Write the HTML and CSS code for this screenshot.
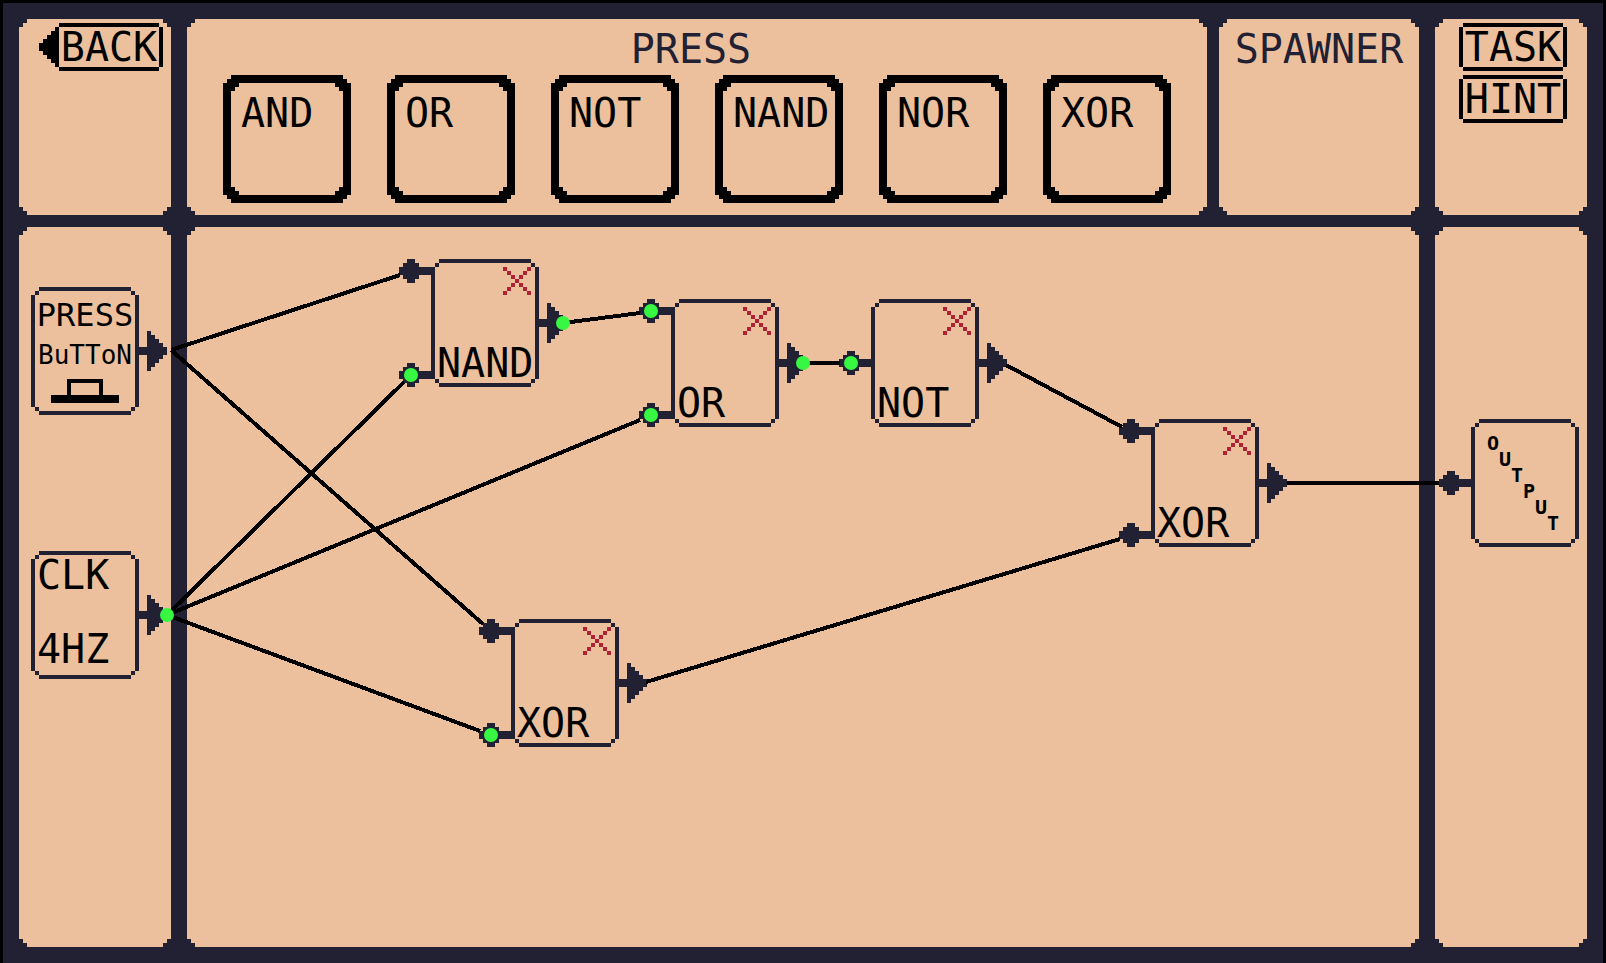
FILE: index.html
```html
<!DOCTYPE html>
<html lang="en">
<head>
<meta charset="utf-8">
<meta name="viewport" content="width=device-width, initial-scale=1">
<title>Logic gates</title>
<link rel="stylesheet" href="styles.css">
</head>
<body>
<svg class="defs" aria-hidden="true">
  <symbol id="slot" viewBox="0 0 32 32"><path d="M2 0H30V1H31V2H32V30H31V31H30V32H2V31H1V30H0V2H1V1H2ZM4 2V3H3V4H2V28H3V29H4V30H28V29H29V28H30V4H29V3H28V2Z" fill-rule="evenodd"/></symbol>
  <symbol id="plate" viewBox="0 0 27 12"><path d="M1 0H26V1H1ZM1 11H26V12H1ZM0 1H1V11H0ZM26 1H27V11H26Z"/></symbol>
  <symbol id="arrow" viewBox="0 0 4 12"><path d="M4 2H3V3H2V4H1V5H0V7H1V8H2V9H3V10H4Z"/></symbol>
  <symbol id="body" viewBox="0 0 27 32"><path d="M2 0H25V1H2ZM2 31H25V32H2ZM0 2H1V30H0ZM26 2H27V30H26ZM1 1H2V2H1ZM25 1H26V2H25ZM1 30H2V31H1ZM25 30H26V31H25Z"/></symbol>
  <symbol id="out" viewBox="0 0 7 10"><path d="M0 4H2V0H3V1H4V2H5V3H6V4H7V6H6V7H5V8H4V9H3V10H2V6H0Z"/></symbol>
  <symbol id="in" viewBox="0 0 8 6"><path d="M0 2H1V1H2V0H4V1H5V2H8V4H5V5H4V6H2V5H1V4H0Z"/></symbol>
  <symbol id="cross" viewBox="0 0 7 7"><path d="M0 0H1V1H0ZM1 1H2V2H1ZM2 2H3V3H2ZM3 3H4V4H3ZM4 4H5V5H4ZM5 5H6V6H5ZM6 6H7V7H6ZM6 0H7V1H6ZM5 1H6V2H5ZM4 2H5V3H4ZM2 4H3V5H2ZM1 5H2V6H1ZM0 6H1V7H0Z"/></symbol>
</svg>
<div class="screen">
  <main class="board">
    <nav class="panel nav-left">
      <button class="plate back" type="button"><svg class="back-arrow" aria-hidden="true"><use href="#arrow"/></svg><svg class="frame" aria-hidden="true"><use href="#plate"/></svg>BACK</button>
    </nav>
    <div class="tools">
      <section class="panel palette">
        <h1 class="heading palette-title">PRESS</h1>
        <div class="slots">
          <button class="slot" type="button"><svg class="frame" aria-hidden="true"><use href="#slot"/></svg>AND</button>
          <button class="slot" type="button"><svg class="frame" aria-hidden="true"><use href="#slot"/></svg>OR</button>
          <button class="slot" type="button"><svg class="frame" aria-hidden="true"><use href="#slot"/></svg>NOT</button>
          <button class="slot" type="button"><svg class="frame" aria-hidden="true"><use href="#slot"/></svg>NAND</button>
          <button class="slot" type="button"><svg class="frame" aria-hidden="true"><use href="#slot"/></svg>NOR</button>
          <button class="slot" type="button"><svg class="frame" aria-hidden="true"><use href="#slot"/></svg>XOR</button>
        </div>
      </section>
      <section class="panel spawner"><h2 class="heading">SPAWNER</h2></section>
    </div>
    <nav class="panel nav-right">
      <button class="plate" type="button"><svg class="frame" aria-hidden="true"><use href="#plate"/></svg>TASK</button>
      <button class="plate" type="button"><svg class="frame" aria-hidden="true"><use href="#plate"/></svg>HINT</button>
    </nav>

    <section class="panel inputs">
      <button class="node press" type="button">
        <svg class="frame" aria-hidden="true"><use href="#body"/></svg><svg class="port out" aria-hidden="true"><use href="#out"/></svg>
        <span class="press-top">PRESS</span>
        <span class="press-bottom">BuTToN</span>
        <svg class="push" viewBox="0 0 17 6" aria-hidden="true"><path d="M4 0H13V4H17V6H0V4H4ZM5 1V4H12V1Z" fill-rule="evenodd"/></svg>
      </button>
      <div class="node clock">
        <svg class="frame" aria-hidden="true"><use href="#body"/></svg><svg class="port out" aria-hidden="true"><use href="#out"/></svg>
        <span>CLK</span><span>4HZ</span>
      </div>
    </section>

    <section class="panel workspace">
      <div class="node gate nand"><svg class="frame" aria-hidden="true"><use href="#body"/></svg><svg class="port in-top" aria-hidden="true"><use href="#in"/></svg><svg class="port in-bottom" aria-hidden="true"><use href="#in"/></svg><svg class="port out" aria-hidden="true"><use href="#out"/></svg><button class="remove" type="button" aria-label="Remove NAND"><svg aria-hidden="true"><use href="#cross"/></svg></button><span>NAND</span></div>
      <div class="node gate or"><svg class="frame" aria-hidden="true"><use href="#body"/></svg><svg class="port in-top" aria-hidden="true"><use href="#in"/></svg><svg class="port in-bottom" aria-hidden="true"><use href="#in"/></svg><svg class="port out" aria-hidden="true"><use href="#out"/></svg><button class="remove" type="button" aria-label="Remove OR"><svg aria-hidden="true"><use href="#cross"/></svg></button><span>OR</span></div>
      <div class="node gate not"><svg class="frame" aria-hidden="true"><use href="#body"/></svg><svg class="port in-middle" aria-hidden="true"><use href="#in"/></svg><svg class="port out" aria-hidden="true"><use href="#out"/></svg><button class="remove" type="button" aria-label="Remove NOT"><svg aria-hidden="true"><use href="#cross"/></svg></button><span>NOT</span></div>
      <div class="node gate xor-final"><svg class="frame" aria-hidden="true"><use href="#body"/></svg><svg class="port in-top" aria-hidden="true"><use href="#in"/></svg><svg class="port in-bottom" aria-hidden="true"><use href="#in"/></svg><svg class="port out" aria-hidden="true"><use href="#out"/></svg><button class="remove" type="button" aria-label="Remove XOR"><svg aria-hidden="true"><use href="#cross"/></svg></button><span>XOR</span></div>
      <div class="node gate xor-first"><svg class="frame" aria-hidden="true"><use href="#body"/></svg><svg class="port in-top" aria-hidden="true"><use href="#in"/></svg><svg class="port in-bottom" aria-hidden="true"><use href="#in"/></svg><svg class="port out" aria-hidden="true"><use href="#out"/></svg><button class="remove" type="button" aria-label="Remove XOR"><svg aria-hidden="true"><use href="#cross"/></svg></button><span>XOR</span></div>
    </section>

    <section class="panel outputs">
      <div class="node output">
        <svg class="frame" aria-hidden="true"><use href="#body"/></svg><svg class="port in-middle" aria-hidden="true"><use href="#in"/></svg>
        <span>O</span><span>U</span><span>T</span><span>P</span><span>U</span><span>T</span>
      </div>
    </section>
  </main>

  <svg class="wires" aria-hidden="true">
    <g class="wire">
      <path d="M171 350L400 275"/>
      <path d="M171 350L483 624"/>
      <path d="M167 615L404 382"/>
      <path d="M167 615L640 420"/>
      <path d="M167 615L480 731"/>
      <path d="M563 323L640 313"/>
      <path d="M803 363H840"/>
      <path d="M1006 365L1122 427"/>
      <path d="M646 682L1120 539"/>
    </g>
    <g class="live">
      <circle cx="167" cy="615" r="7"/>
      <circle cx="411" cy="375" r="7"/>
      <circle cx="563" cy="323" r="7"/>
      <circle cx="651" cy="311" r="7"/>
      <circle cx="651" cy="415" r="7"/>
      <circle cx="803" cy="363" r="7"/>
      <circle cx="851" cy="363" r="7"/>
      <circle cx="491" cy="735" r="7"/>
    </g>
  </svg>
  <div class="output-wire"></div>
</div>
</body>
</html>
```
FILE: styles.css
```css
:root {
  --ink: #000;
  --line: #222033;
  --paper: #ecc09c;
  --red: #ae2334;
  --green: #37f743;
}

* { box-sizing: border-box; }

body {
  margin: 0;
  background: var(--ink);
  color: var(--ink);
  font: 40px/44px "DejaVu Sans Mono", monospace;
}

button {
  margin: 0;
  padding: 0;
  border: 0;
  background: none;
  color: inherit;
  font: inherit;
  text-align: left;
  cursor: pointer;
}

svg { display: block; fill: currentColor; }
.defs { position: absolute; width: 0; height: 0; }

.screen {
  position: relative;
  min-width: 1606px;
  min-height: 100vh;
  padding: 3px 3px 0;
  display: flex;
}

.board {
  flex: 1;
  display: grid;
  grid-template-columns: 152px 1fr 152px;
  grid-template-rows: auto 1fr;
  gap: 12px 16px;
  padding: 16px;
  background: var(--line);
}

/* Stepped pixel corners */
.panel {
  background: var(--paper);
  clip-path: polygon(
    0 8px, 4px 8px, 4px 4px, 8px 4px, 8px 0,
    calc(100% - 8px) 0, calc(100% - 8px) 4px, calc(100% - 4px) 4px, calc(100% - 4px) 8px, 100% 8px,
    100% calc(100% - 8px), calc(100% - 4px) calc(100% - 8px), calc(100% - 4px) calc(100% - 4px), calc(100% - 8px) calc(100% - 4px), calc(100% - 8px) 100%,
    8px 100%, 8px calc(100% - 4px), 4px calc(100% - 4px), 4px calc(100% - 8px), 0 calc(100% - 8px));
}

.frame {
  position: absolute;
  inset: 0;
  width: 100%;
  height: 100%;
}

.nav-left, .nav-right {
  display: flex;
  flex-direction: column;
  align-items: flex-end;
  gap: 4px;
}
.nav-left { padding: 4px 8px; }
.nav-right { padding: 4px 20px; }

.plate {
  position: relative;
  width: 108px;
  height: 48px;
  text-align: center;
}
.back-arrow {
  position: absolute;
  right: 100%;
  top: 0;
  width: 16px;
  height: 48px;
}

.tools { display: flex; gap: 12px; }
.palette { flex: 1; padding: 8px 36px 12px; }
.spawner { width: 200px; padding-top: 8px; }
.heading {
  margin: 0;
  color: var(--line);
  font: inherit;
  text-align: center;
}
.palette-title { padding-right: 12px; }

.slots {
  display: flex;
  justify-content: space-between;
  margin-top: 4px;
}
.slot {
  position: relative;
  display: flex;
  width: 128px;
  height: 128px;
  padding: 16px 0 0 18px;
}

.node {
  position: relative;
  width: 108px;
  height: 128px;
}
.node > .frame, .port { color: var(--line); }
.port { position: absolute; width: 32px; height: 24px; right: 100%; }
.port.in-top { top: 0; }
.port.in-middle { top: 52px; }
.port.in-bottom { bottom: 0; }
.port.out { left: 100%; top: 44px; width: 28px; height: 40px; }

.inputs {
  display: flex;
  flex-direction: column;
  gap: 136px;
  padding: 60px 12px;
}
.press {
  display: flex;
  flex-direction: column;
  align-items: center;
  padding-top: 8px;
}
.press-top { font-size: 32px; line-height: 40px; }
.press-bottom { font-size: 26px; line-height: 40px; }
.push { width: 68px; height: 24px; margin-top: 4px; }
.clock {
  display: flex;
  flex-direction: column;
  justify-content: space-between;
  padding: 2px 6px 8px;
}

.workspace { position: relative; }
.gate {
  position: absolute;
  display: flex;
  align-items: flex-end;
  padding: 0 6px 2px;
}
.nand { left: 244px; top: 32px; }
.or { left: 484px; top: 72px; }
.not { left: 684px; top: 72px; }
.xor-final { left: 964px; top: 192px; }
.xor-first { left: 324px; top: 392px; }

.remove {
  position: absolute;
  top: 8px;
  right: 8px;
  color: var(--red);
}
.remove svg { width: 28px; height: 28px; }

.outputs { padding: 192px 8px 0 36px; }
.output {
  display: grid;
  grid-template-columns: repeat(6, 12px);
  grid-template-rows: repeat(6, 16px);
  padding: 16px;
  font-size: 20px;
  font-weight: bold;
  line-height: 16px;
}
.output span:nth-of-type(1) { grid-area: 1 / 1; }
.output span:nth-of-type(2) { grid-area: 2 / 2; }
.output span:nth-of-type(3) { grid-area: 3 / 3; }
.output span:nth-of-type(4) { grid-area: 4 / 4; }
.output span:nth-of-type(5) { grid-area: 5 / 5; }
.output span:nth-of-type(6) { grid-area: 6 / 6; }

.wires {
  position: absolute;
  inset: 0;
  width: 100%;
  height: 100%;
  pointer-events: none;
}
.wire { fill: none; stroke: var(--ink); stroke-width: 4; shape-rendering: crispEdges; }
.live { fill: var(--green); }
.output-wire {
  position: absolute;
  left: 1287px;
  right: 167px;
  top: 481px;
  height: 4px;
  background: var(--ink);
}
```
